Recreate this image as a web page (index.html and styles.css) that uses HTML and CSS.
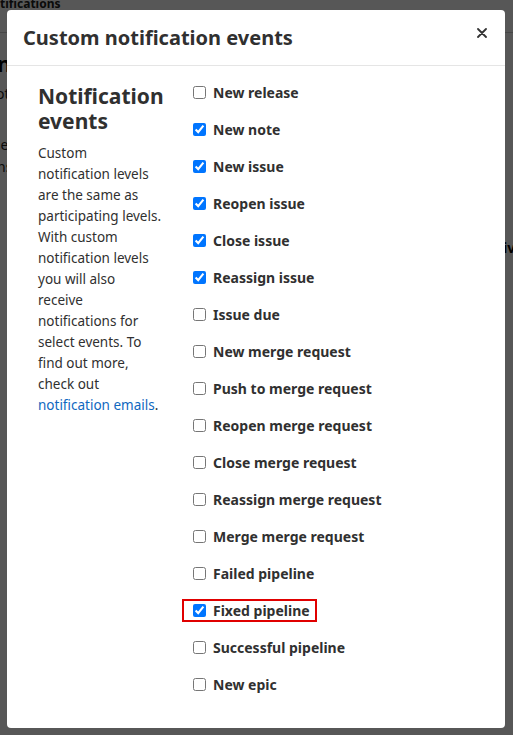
FILE: index.html
```html
<!DOCTYPE html>
<html>
<head>
<meta charset="utf-8">
<link rel="stylesheet" href="styles.css">
</head>
<body>
<div class="page">
  <div class="bg-top">tifications</div>
  <div class="bg-rule"></div>
  <div class="bg-h">n</div>
  <div class="bg-t1">ot</div>
  <div class="bg-t2">je<br>ns</div>
  <div class="bg-right">iv</div>
</div>
<div class="overlay"></div>
<div class="modal">
  <div class="modal-header">
    <h2 class="modal-title">Custom notification events</h2>
    <button class="close" aria-label="Close">
      <svg width="10" height="10" viewBox="0 0 10 10"><path d="M1 1 L9 9 M9 1 L1 9" stroke="#333" stroke-width="1.8" stroke-linecap="round"/></svg>
    </button>
  </div>
  <div class="modal-body">
    <div class="info">
      <h4 class="info-title">Notification events</h4>
      <p class="info-text">Custom<br>notification levels<br>are the same as<br>participating levels.<br>With custom<br>notification levels<br>you will also<br>receive<br>notifications for<br>select events. To<br>find out more,<br>check out<br><a href="#">notification emails</a>.</p>
    </div>
    <div class="options">
      <label class="opt"><input type="checkbox"><span>New release</span></label>
      <label class="opt"><input type="checkbox" checked><span>New note</span></label>
      <label class="opt"><input type="checkbox" checked><span>New issue</span></label>
      <label class="opt"><input type="checkbox" checked><span>Reopen issue</span></label>
      <label class="opt"><input type="checkbox" checked><span>Close issue</span></label>
      <label class="opt"><input type="checkbox" checked><span>Reassign issue</span></label>
      <label class="opt"><input type="checkbox"><span>Issue due</span></label>
      <label class="opt"><input type="checkbox"><span>New merge request</span></label>
      <label class="opt"><input type="checkbox"><span>Push to merge request</span></label>
      <label class="opt"><input type="checkbox"><span>Reopen merge request</span></label>
      <label class="opt"><input type="checkbox"><span>Close merge request</span></label>
      <label class="opt"><input type="checkbox"><span>Reassign merge request</span></label>
      <label class="opt"><input type="checkbox"><span>Merge merge request</span></label>
      <label class="opt"><input type="checkbox"><span>Failed pipeline</span></label>
      <label class="opt highlight"><input type="checkbox" checked><span>Fixed pipeline</span></label>
      <label class="opt"><input type="checkbox"><span>Successful pipeline</span></label>
      <label class="opt"><input type="checkbox"><span>New epic</span></label>
    </div>
  </div>
</div>
</body>
</html>
```
FILE: styles.css
```css
html, body {
  margin: 0;
  padding: 0;
  width: 513px;
  height: 735px;
  overflow: hidden;
  font-family: "Noto Sans", "Open Sans", sans-serif;
  color: #303030;
  background: #fff;
}
.page {
  position: absolute;
  inset: 0;
  background: #fff;
}
.bg-top {
  position: absolute;
  left: 0;
  top: -5px;
  font-size: 12px;
  font-weight: 700;
  color: #222;
}
.bg-rule {
  position: absolute;
  left: 0;
  right: 0;
  top: 32px;
  height: 1px;
  background: #ccc;
}
.bg-h {
  position: absolute;
  left: -3px;
  top: 48px;
  font-size: 22px;
  font-weight: 700;
  color: #000;
}
.bg-t1 {
  position: absolute;
  left: -4px;
  top: 84px;
  font-size: 14px;
  color: #222;
}
.bg-t2 {
  position: absolute;
  left: -3px;
  top: 134px;
  font-size: 14px;
  line-height: 22px;
  color: #222;
}
.bg-right {
  position: absolute;
  left: 503px;
  top: 238px;
  font-size: 14px;
  font-weight: 700;
  color: #000;
}
.overlay {
  position: absolute;
  inset: 0;
  background: rgba(0, 0, 0, 0.66);
}
.modal {
  position: absolute;
  left: 7px;
  top: 10px;
  width: 498px;
  height: 718px;
  background: #fff;
  border-radius: 4px;
  display: flex;
  flex-direction: column;
}
.modal-header {
  height: 56px;
  border-bottom: 1px solid #e5e5e5;
  display: flex;
  align-items: center;
  justify-content: space-between;
  padding: 0 16px;
  box-sizing: border-box;
  flex: none;
}
.modal-title {
  margin: 0;
  font-size: 20px;
  font-weight: 700;
  color: #303030;
}
.close {
  border: 0;
  background: none;
  padding: 0;
  width: 12px;
  height: 12px;
  display: flex;
  align-items: center;
  justify-content: center;
  margin-right: 1px;
  margin-top: -9px;
}
.modal-body {
  display: flex;
  padding: 15px 0 0 31px;
}
.info {
  width: 128px;
  flex: none;
  margin-right: 16px;
  padding-top: 3px;
}
.info-title {
  margin: 0;
  font-size: 21px;
  line-height: 25px;
  font-weight: 700;
  color: #303030;
}
.info-text {
  margin: 9px 0 0;
  font-size: 13.5px;
  line-height: 21px;
  white-space: nowrap;
  color: #303030;
}
.info-text a {
  color: #1068bf;
  text-decoration: none;
}
.options {
  display: flex;
  flex-direction: column;
  align-items: flex-start;
  gap: 14px;
}
.opt {
  display: flex;
  align-items: center;
  height: 23px;
  box-sizing: border-box;
  border: 2px solid transparent;
  padding: 0 5px 0 9px;
  font-size: 14px;
  font-weight: 700;
  color: #303030;
}
.opt input {
  margin: 0 7px 0 0;
  width: 13px;
  height: 13px;
}
.opt.highlight {
  border-color: #e00000;
}
```
